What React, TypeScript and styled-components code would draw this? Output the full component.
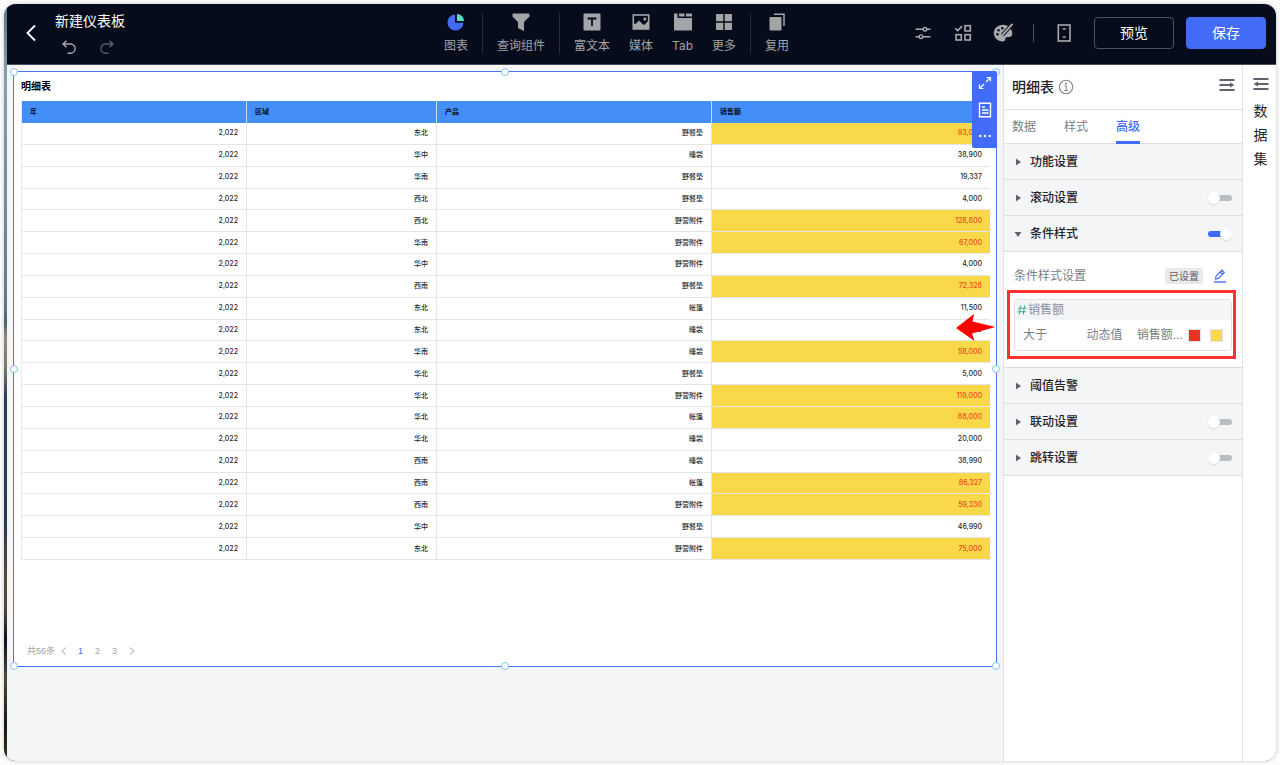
import React, { useState } from "react";
import styled, { createGlobalStyle } from "styled-components";

const GlobalStyle = createGlobalStyle`
  *, *::before, *::after { box-sizing: border-box; }
  body {
    margin: 0;
    background: #fdfdfd;
    color: #1f2329;
    font-family: Inter, "Noto Sans CJK SC", sans-serif;
    font-size: 12px;
    line-height: 18px;
  }
  button, input { font: inherit; color: inherit; }
  svg { display: block; flex: none; }
`;

/* ---------- shell ---------- */

const Page = styled.div`
  display: flex;
  min-height: 100vh;
  padding: 4px;
`;

const Window = styled.div`
  flex: 1;
  min-width: 0;
  display: flex;
  flex-direction: column;
  padding-left: 3px;
  overflow: hidden;
  border-radius: 12px;
  background: linear-gradient(
    #5b7480 0%,
    #87a2ad 10%,
    #5f7988 40%,
    #4f5f70 42%,
    #93897a 44%,
    #7d776d 48%,
    #2c3d59 52%,
    #2b3852 68%,
    #5a4a3c 76%,
    #57473a 80%,
    #0a1224 84%,
    #54493c 89%,
    #1d160d 95%,
    #3a2c1d 100%
  );
  box-shadow: 0 0 4px rgba(0, 0, 0, 0.22);
`;

const Header = styled.header`
  display: flex;
  align-items: stretch;
  height: 61px;
  padding-bottom: 2px;
  background: #060c1c;
  border-bottom: 1px solid #4a4e5a;
`;

const HeaderStart = styled.div`
  flex: 7;
  display: flex;
  align-items: center;
  gap: 18px;
  padding-left: 18px;
`;

const TitleBlock = styled.div`
  display: flex;
  flex-direction: column;
  gap: 8px;
`;

const DashboardTitle = styled.h1`
  margin: 0;
  color: #fff;
  font-size: 14px;
  font-weight: 400;
  line-height: 20px;
`;

const History = styled.div`
  display: flex;
  gap: 22px;
  padding-left: 6px;
`;

const IconButton = styled.button<{ $color?: string }>`
  display: flex;
  align-items: center;
  justify-content: center;
  padding: 0;
  border: 0;
  background: none;
  color: ${(p) => p.$color || "#a8a9ac"};
  cursor: pointer;
`;

const Toolbar = styled.nav`
  display: flex;
  align-items: center;
`;

const ToolGroup = styled.div`
  display: flex;
  gap: 19px;
  padding: 0 14px;
  height: 40px;
  & + & { border-left: 1px solid #2a2f3d; }
`;

const ToolButton = styled.button`
  display: flex;
  flex-direction: column;
  align-items: center;
  gap: 6px;
  padding: 0;
  border: 0;
  background: none;
  color: #a3a4a6;
  font-size: 12px;
  line-height: 18px;
  white-space: nowrap;
  cursor: pointer;
`;

const HeaderEnd = styled.div`
  flex: 8;
  display: flex;
  align-items: center;
  justify-content: flex-end;
  gap: 20px;
  padding-right: 10px;
`;

const Divider = styled.span`
  width: 1px;
  height: 18px;
  background: #4c505b;
`;

const Actions = styled.div`
  display: flex;
  gap: 12px;
`;

const ActionButton = styled.button<{ $primary?: boolean }>`
  width: 80px;
  height: 32px;
  padding: 0;
  border: 1px solid ${(p) => (p.$primary ? "#426cf8" : "#4d515d")};
  border-radius: 4px;
  background: ${(p) => (p.$primary ? "#426cf8" : "transparent")};
  color: #fff;
  font-size: 14px;
  line-height: 20px;
  cursor: pointer;
`;

const Body = styled.div`
  flex: 1;
  display: flex;
  background: #f4f5f7;
`;

/* ---------- canvas ---------- */

const Canvas = styled.main`
  flex: 1;
  min-width: 0;
  padding: 6px;
`;

const Widget = styled.section`
  position: relative;
  display: flex;
  flex-direction: column;
  min-height: 596px;
  padding: 6px 8px 6px 7px;
  border: 1px solid #4f74f7;
  background: #fff;
`;

const WidgetTitle = styled.h2`
  margin: 0;
  padding-bottom: 7px;
  color: #000;
  font-size: 10px;
  font-weight: 700;
  line-height: 16px;
`;

const Table = styled.table`
  width: 100%;
  height: 459px;
  table-layout: fixed;
  border-collapse: separate;
  border-spacing: 0;
  border-left: 1px solid #e9eaec;
  color: #2b2c2e;
  font-size: 7px;
  line-height: 10px;
`;

const HeadCell = styled.th`
  height: 22px;
  padding: 0 8px;
  border-right: 1px solid #c9dbf2;
  background: #448ef7;
  color: #06101f;
  font-weight: 700;
  text-align: left;
  &:last-child { border-right: 0; }
`;

const Cell = styled.td<{ $marked?: boolean }>`
  padding: 0 8px;
  border-right: 1px solid #e4e5e6;
  border-bottom: 1px solid #e4e5e6;
  background: ${(p) => (p.$marked ? "#f9d84a" : "#fff")};
  color: ${(p) => (p.$marked ? "#ee4a22" : "inherit")};
  font-weight: 500;
  text-align: right;
  &:last-child { border-right: 0; }
`;

const Pager = styled.div`
  display: flex;
  align-items: center;
  margin-top: auto;
  padding: 0 6px;
  color: #a4a6aa;
  font-family: "Liberation Sans", "Noto Sans CJK SC", sans-serif;
  font-size: 9px;
  line-height: 18px;
`;

const PageButton = styled.button<{ $current?: boolean }>`
  display: flex;
  align-items: center;
  justify-content: center;
  width: 17px;
  height: 18px;
  padding: 0;
  border: 0;
  background: none;
  color: ${(p) => (p.$current ? "#426cf8" : "#a4a6aa")};
  cursor: pointer;
`;

const Handle = styled.span<{ $x: number; $y: number }>`
  position: absolute;
  left: ${(p) => p.$x}%;
  top: ${(p) => p.$y}%;
  width: 8px;
  height: 8px;
  margin: -4px 0 0 -4px;
  border: 1px solid #7cc6f7;
  border-radius: 50%;
  background: #fff;
`;

const FloatingTools = styled.div`
  position: absolute;
  top: -1px;
  right: -1px;
  display: flex;
  flex-direction: column;
  justify-content: space-between;
  align-items: center;
  width: 25px;
  height: 77px;
  padding: 5px 0;
  border-radius: 2px;
  background: #426cf8;
`;

const ArrowMark = styled.svg`
  position: absolute;
  top: 242px;
  right: 0;
`;

/* ---------- settings panel ---------- */

const Panel = styled.aside`
  width: 240px;
  border-left: 1px solid #dfe1e4;
  border-right: 1px solid #dfe1e4;
  background: #fff;
`;

const PanelHeader = styled.div`
  display: flex;
  align-items: center;
  gap: 4px;
  height: 45px;
  padding: 0 7px 0 8px;
  border-bottom: 1px solid #dfe1e4;
`;

const PanelTitle = styled.h2`
  margin: 0;
  font-size: 14px;
  font-weight: 500;
  line-height: 20px;
`;

const PushEnd = styled.span`
  margin-left: auto;
  padding-bottom: 5px;
`;

const Tabs = styled.div`
  display: flex;
  gap: 28px;
  height: 34px;
  padding: 0 8px;
  border-bottom: 1px solid #dfe1e4;
`;

const Tab = styled.button<{ $active?: boolean }>`
  margin-bottom: -1px;
  padding: 0;
  border: 0;
  border-top: 3px solid transparent;
  border-bottom: 3px solid ${(p) => (p.$active ? "#426cf8" : "transparent")};
  background: none;
  color: ${(p) => (p.$active ? "#426cf8" : "#7b7f88")};
  font-weight: ${(p) => (p.$active ? 500 : 400)};
  cursor: pointer;
`;

const SectionRow = styled.div`
  display: flex;
  align-items: center;
  height: 36px;
  padding: 0 10px 0 8px;
  border-bottom: 1px solid #dcdee1;
  background: #f4f5f7;
`;

const SectionToggle = styled.button`
  display: flex;
  align-items: center;
  gap: 6px;
  padding: 0;
  border: 0;
  background: none;
  font-size: 12px;
  font-weight: 500;
  cursor: pointer;
`;

const Caret = styled.svg<{ $open?: boolean }>`
  width: 12px;
  height: 12px;
  fill: #5f636b;
  transform: rotate(${(p) => (p.$open ? 90 : 0)}deg);
`;

const Switch = styled.input`
  appearance: none;
  display: flex;
  align-items: center;
  width: 24px;
  height: 12px;
  margin: 0 0 0 auto;
  background: linear-gradient(#b9bcc3, #b9bcc3) center / 20px 6px no-repeat;
  border-radius: 6px;
  cursor: pointer;
  &::before {
    content: "";
    width: 12px;
    height: 12px;
    border-radius: 50%;
    background: #fff;
    box-shadow: 0 1px 2px rgba(0, 0, 0, 0.12);
  }
  &::after {
    content: "";
    width: 12px;
    height: 6px;
    border-radius: 0 3px 3px 0;
    background: #b9bcc3;
  }
  &:checked {
    flex-direction: row-reverse;
    background-image: linear-gradient(#426cf8, #426cf8);
  }
  &:checked::after {
    border-radius: 3px 0 0 3px;
    background: #426cf8;
  }
`;

const SectionBody = styled.div`
  padding: 15px 10px 16px;
  border-bottom: 1px solid #dcdee1;
`;

const SettingLine = styled.div`
  display: flex;
  align-items: center;
  padding-right: 5px;
  color: #7b7f88;
`;

const StatusTag = styled.span`
  margin: 0 10px 0 auto;
  padding: 0 4px;
  border-radius: 2px;
  background: #e7e9ea;
  color: #5a5e66;
  font-size: 10px;
  line-height: 16px;
`;

const RuleCard = styled.div`
  position: relative;
  margin-top: 14px;
  border: 1px solid #dfe1e6;
  border-radius: 4px;
`;

const RuleField = styled.div`
  display: flex;
  gap: 1px;
  align-items: center;
  height: 20px;
  padding: 0 2px;
  background: #f3f5f7;
  color: #8790a3;
`;

const RuleRow = styled.div`
  display: flex;
  align-items: center;
  height: 30px;
  padding: 0 8px;
  color: #7b7f88;
`;

const Operator = styled.span`
  flex: 1;
`;

const Operand = styled.span`
  margin-right: 14px;
`;

const Target = styled.span`
  margin-right: 5px;
`;

const Swatch = styled.button<{ $color: string }>`
  width: 13px;
  height: 13px;
  padding: 0;
  border: 1px solid #e1e3e8;
  background: ${(p) => p.$color};
  cursor: pointer;
  & + & { margin-left: 9px; }
`;

const RedFrame = styled.div`
  position: absolute;
  inset: -10px -5px -9px -8px;
  border: 3px solid #fb3330;
  pointer-events: none;
`;

const DatasetRail = styled.aside`
  display: flex;
  flex-direction: column;
  align-items: center;
  gap: 8px;
  width: 33px;
  padding: 12px 0 0 2px;
  background: #fff;
`;

const RailLabel = styled.span`
  width: 14px;
  font-size: 14px;
  line-height: 24px;
`;

/* ---------- icons ---------- */

const ChartIcon = () => (
  <svg width="18" height="18" viewBox="0 0 18 18">
    <path d="M8 1.5a8 8 0 1 0 8.5 8.2H8z" fill="#426cf8" />
    <path d="M10 1a7 7 0 0 1 7 7h-7z" fill="#5fdcc0" />
  </svg>
);
const FunnelIcon = () => (
  <svg width="18" height="18" viewBox="0 0 18 18" fill="currentColor">
    <path d="M1.500 .5h15q1 0 1 1V3.500l-5.500 5.500v9l-6-3V9L.5 3.500v-2q0-1 1-1z" />
  </svg>
);
const RichTextIcon = () => (
  <svg width="18" height="18" viewBox="0 0 18 18">
    <rect x=".5" y=".5" width="17" height="17" rx="1" fill="currentColor" />
    <path d="M4.500 5.500h9M9 5.500V13" stroke="#060c1c" strokeWidth="1.800" />
  </svg>
);
const MediaIcon = () => (
  <svg width="18" height="18" viewBox="0 0 18 18">
    <rect x="1.300" y="2" width="15.400" height="14" fill="none" stroke="currentColor" strokeWidth="1.600" />
    <path d="M2 10.500l1.500.5L7 7.500l4 4 1.500.3 3.500-3.800V16H2z" fill="currentColor" />
    <circle cx="12.800" cy="6" r="1.500" fill="currentColor" />
  </svg>
);
const TabIcon = () => (
  <svg width="20" height="18" viewBox="0 0 20 18" fill="currentColor">
    <path d="M1 .5h3.500V5H19v11.500q0 1-1 1H2q-1 0-1-1z" />
    <path d="M6 .5h5.500v3H6zM13 .5h5q1 0 1 1v2h-6z" />
  </svg>
);
const MoreIcon = () => (
  <svg width="18" height="18" viewBox="0 0 18 18" fill="currentColor">
    <rect x="1" y="1" width="7.300" height="7.300" rx=".8" />
    <rect x="9.700" y="1" width="7.300" height="7.300" rx=".8" />
    <rect x="1" y="9.700" width="7.300" height="7.300" rx=".8" />
    <rect x="9.700" y="9.700" width="7.300" height="7.300" rx=".8" />
  </svg>
);
const ReuseIcon = () => (
  <svg width="18" height="18" viewBox="0 0 18 18">
    <rect x="1.500" y="4" width="12" height="13.500" rx="1" fill="currentColor" />
    <path d="M6 1.300h10V13" fill="none" stroke="currentColor" strokeWidth="1.500" />
  </svg>
);
const BackIcon = () => (
  <svg width="12" height="18" viewBox="0 0 12 18" fill="none" stroke="#fff" strokeWidth="1.800">
    <path d="M10 1.500L2.500 9l7.500 7.500" />
  </svg>
);
const UndoIcon = ({ flip }: { flip?: boolean }) => (
  <svg width="16" height="16" viewBox="0 0 16 16" fill="none" stroke="currentColor" strokeWidth="1.400">
    <g transform={flip ? "translate(16 0) scale(-1 1)" : undefined}>
      <path d="M5.500 1.800L2 5l3.500 3.300M2 5h7.500a4.600 4.600 0 0 1 0 9.200H6.500" />
    </g>
  </svg>
);
const SlidersIcon = () => (
  <svg width="20" height="20" viewBox="0 0 20 20" fill="none" stroke="currentColor" strokeWidth="1.400">
    <path d="M2.500 6.300h7.500M14 6.300h3.500M2.500 13.700H6M10 13.700h7.500" />
    <circle cx="12" cy="6.300" r="1.800" />
    <circle cx="8" cy="13.700" r="1.800" />
  </svg>
);
const CheckGridIcon = () => (
  <svg width="20" height="20" viewBox="0 0 20 20" fill="none" stroke="currentColor" strokeWidth="1.600">
    <path d="M2.300 5.200l2.400 2.400 4.300-4.500" />
    <rect x="12" y="2.700" width="5.300" height="5.300" />
    <rect x="3" y="11.700" width="5.300" height="5.300" />
    <rect x="12" y="11.700" width="5.300" height="5.300" />
  </svg>
);
const PaletteIcon = () => (
  <svg width="20" height="20" viewBox="0 0 20 20">
    <path
      d="M10 1.700C5 1.700.8 5.300.8 10s4 8.400 8.700 8.400c1.700 0 2.800-.6 2.800-1.900 0-1.700.7-2.400 2.200-2.400h1.800c2 0 3-1.700 3-3.600 0-4.700-4.300-8.800-9.300-8.800z"
      fill="currentColor"
    />
    <g fill="#060c1c">
      <circle cx="4.500" cy="11.300" r="1.200" />
      <circle cx="5.600" cy="7.300" r="1.200" />
      <circle cx="9.300" cy="5.300" r="1.200" />
    </g>
    <path d="M20 .5L9.500 12" stroke="#060c1c" strokeWidth="3.800" />
    <path d="M19.500 1L9.500 12" stroke="currentColor" strokeWidth="1.900" />
  </svg>
);
const DeviceIcon = () => (
  <svg width="20" height="20" viewBox="0 0 20 20" fill="none" stroke="currentColor" strokeWidth="1.600">
    <rect x="4.300" y="2" width="11.700" height="16" />
    <path d="M8.700 6h3M8.700 14h3" />
  </svg>
);
const ExpandIcon = () => (
  <svg width="14" height="14" viewBox="0 0 14 14" fill="none" stroke="#fff" strokeWidth="1.200">
    <path d="M8.500 1.500h4v4M12.500 1.500L8 6M5.500 12.500h-4v-4M1.500 12.500L6 8" />
  </svg>
);
const DocIcon = () => (
  <svg width="14" height="16" viewBox="0 0 14 16" fill="none" stroke="#fff" strokeWidth="1.400">
    <path d="M1.500 1.200h11v13.600h-11zM4 5h3M4 8h6.500M4 11h6.500" />
  </svg>
);
const DotsIcon = () => (
  <svg width="14" height="14" viewBox="0 0 14 14" fill="#fff">
    <circle cx="2.300" cy="7" r="1.200" />
    <circle cx="7" cy="7" r="1.200" />
    <circle cx="11.700" cy="7" r="1.200" />
  </svg>
);
const InfoIcon = () => (
  <svg width="16" height="16" viewBox="0 0 16 16" fill="none" stroke="#858991" strokeWidth="1.100">
    <circle cx="8" cy="8" r="6.700" />
    <path d="M6.500 7h1.700v4.500M6.200 11.500h4" />
    <circle cx="8" cy="4.700" r=".5" fill="#858991" />
  </svg>
);
const CollapseIcon = ({ flip }: { flip?: boolean }) => (
  <svg width="16" height="14" viewBox="0 0 16 14" fill="#5f636c">
    <g transform={flip ? "translate(16 0) scale(-1 1)" : undefined}>
      <path d="M.5 1h15v2H.5zM.5 11h15v2H.5zM.5 6h10.500v2H.5zM11 4.500l4.500 2.500L11 9.500z" />
    </g>
  </svg>
);
const PencilIcon = () => (
  <svg width="14" height="14" viewBox="0 0 14 14" fill="none" stroke="#426cf8" strokeWidth="1.200">
    <path d="M2.500 10l.6-3L9 1.200l2.300 2.300-5.900 5.900zM7.300 3l2.200 2.200" />
    <path d="M1 13h12" strokeWidth="1.400" />
  </svg>
);
const HashIcon = () => (
  <svg width="10" height="10" viewBox="0 0 10 10" fill="none" stroke="#3fae92" strokeWidth="1.100">
    <path d="M3.700.5L2.200 9.500M7.700.5L6.200 9.500M1 3.200h8.500M.5 6.800H9" />
  </svg>
);
const Chevron = ({ right }: { right?: boolean }) => (
  <svg width="6" height="8" viewBox="0 0 6 8" fill="none" stroke="currentColor" strokeWidth="1">
    <path d={right ? "M1 .5L5 4 1 7.500" : "M5 .5L1 4l4 3.500"} />
  </svg>
);

/* ---------- data ---------- */

const rows: [string, string, string, string, boolean][] = [
  ["2,022", "东北", "野餐垫", "93,000", true],
  ["2,022", "华中", "睡袋", "38,900", false],
  ["2,022", "华南", "野餐垫", "19,337", false],
  ["2,022", "西北", "野餐垫", "4,000", false],
  ["2,022", "西北", "野营附件", "128,800", true],
  ["2,022", "华南", "野营附件", "67,000", true],
  ["2,022", "华中", "野营附件", "4,000", false],
  ["2,022", "西南", "野餐垫", "72,328", true],
  ["2,022", "东北", "帐篷", "11,500", false],
  ["2,022", "东北", "睡袋", "12,000", false],
  ["2,022", "华南", "睡袋", "58,000", true],
  ["2,022", "华北", "野餐垫", "5,000", false],
  ["2,022", "华北", "野营附件", "119,000", true],
  ["2,022", "华北", "帐篷", "88,000", true],
  ["2,022", "华北", "睡袋", "20,000", false],
  ["2,022", "西南", "睡袋", "38,990", false],
  ["2,022", "西南", "帐篷", "86,327", true],
  ["2,022", "西南", "野营附件", "59,330", true],
  ["2,022", "华中", "野餐垫", "46,990", false],
  ["2,022", "东北", "野营附件", "75,000", true],
];

const toolGroups = [
  [{ label: "图表", icon: <ChartIcon /> }],
  [{ label: "查询组件", icon: <FunnelIcon /> }],
  [
    { label: "富文本", icon: <RichTextIcon /> },
    { label: "媒体", icon: <MediaIcon /> },
    { label: "Tab", icon: <TabIcon /> },
    { label: "更多", icon: <MoreIcon /> },
  ],
  [{ label: "复用", icon: <ReuseIcon /> }],
];

const handles = [
  [0, 0], [50, 0], [100, 0], [0, 50], [100, 50], [0, 100], [50, 100], [100, 100],
];

function Section({ label, open, toggle }: { label: string; open?: boolean; toggle?: boolean }) {
  const [on, setOn] = useState(!!open);
  return (
    <SectionRow>
      <SectionToggle aria-expanded={!!open}>
        <Caret viewBox="0 0 12 12" $open={open}>
          <path d="M4 2.500L9 6 4 9.500z" />
        </Caret>
        {label}
      </SectionToggle>
      {toggle && (
        <Switch
          type="checkbox"
          role="switch"
          aria-label={label}
          checked={on}
          onChange={(e) => setOn(e.target.checked)}
        />
      )}
    </SectionRow>
  );
}

export default function App() {
  return (
    <Page>
      <GlobalStyle />
      <Window>
        <Header>
          <HeaderStart>
            <IconButton aria-label="返回"><BackIcon /></IconButton>
            <TitleBlock>
              <DashboardTitle>新建仪表板</DashboardTitle>
              <History>
                <IconButton aria-label="撤销"><UndoIcon /></IconButton>
                <IconButton aria-label="重做" $color="#5b5e66"><UndoIcon flip /></IconButton>
              </History>
            </TitleBlock>
          </HeaderStart>
          <Toolbar>
            {toolGroups.map((group) => (
              <ToolGroup key={group[0].label}>
                {group.map((tool) => (
                  <ToolButton key={tool.label}>
                    {tool.icon}
                    {tool.label}
                  </ToolButton>
                ))}
              </ToolGroup>
            ))}
          </Toolbar>
          <HeaderEnd>
            <IconButton aria-label="筛选"><SlidersIcon /></IconButton>
            <IconButton aria-label="批量"><CheckGridIcon /></IconButton>
            <IconButton aria-label="主题"><PaletteIcon /></IconButton>
            <Divider />
            <IconButton aria-label="移动端"><DeviceIcon /></IconButton>
            <Actions>
              <ActionButton>预览</ActionButton>
              <ActionButton $primary>保存</ActionButton>
            </Actions>
          </HeaderEnd>
        </Header>
        <Body>
          <Canvas>
            <Widget>
              <WidgetTitle>明细表</WidgetTitle>
              <Table>
                <colgroup>
                  <col width="225" />
                  <col width="190" />
                  <col width="275" />
                  <col width="278" />
                </colgroup>
                <thead>
                  <tr>
                    <HeadCell>年</HeadCell>
                    <HeadCell>区域</HeadCell>
                    <HeadCell>产品</HeadCell>
                    <HeadCell>销售额</HeadCell>
                  </tr>
                </thead>
                <tbody>
                  {rows.map(([year, area, product, sales, marked], i) => (
                    <tr key={i}>
                      <Cell>{year}</Cell>
                      <Cell>{area}</Cell>
                      <Cell>{product}</Cell>
                      <Cell $marked={marked}>{sales}</Cell>
                    </tr>
                  ))}
                </tbody>
              </Table>
              <Pager>
                共56条
                <PageButton aria-label="上一页"><Chevron /></PageButton>
                <PageButton $current>1</PageButton>
                <PageButton>2</PageButton>
                <PageButton>3</PageButton>
                <PageButton aria-label="下一页"><Chevron right /></PageButton>
              </Pager>
              {handles.map(([x, y]) => (
                <Handle key={`${x}-${y}`} $x={x} $y={y} />
              ))}
              <FloatingTools>
                <IconButton aria-label="放大"><ExpandIcon /></IconButton>
                <IconButton aria-label="明细"><DocIcon /></IconButton>
                <IconButton aria-label="更多操作"><DotsIcon /></IconButton>
              </FloatingTools>
              <ArrowMark width="40" height="28" viewBox="0 0 40 28" fill="#fe0000">
                <path d="M0 14L18 0l-1.500 7.500L39.500 13 16 19.500 18.500 27z" />
              </ArrowMark>
            </Widget>
          </Canvas>
          <Panel>
            <PanelHeader>
              <PanelTitle>明细表</PanelTitle>
              <InfoIcon />
              <PushEnd>
                <IconButton aria-label="收起面板"><CollapseIcon /></IconButton>
              </PushEnd>
            </PanelHeader>
            <Tabs role="tablist">
              <Tab role="tab">数据</Tab>
              <Tab role="tab">样式</Tab>
              <Tab role="tab" aria-selected $active>高级</Tab>
            </Tabs>
            <Section label="功能设置" />
            <Section label="滚动设置" toggle />
            <Section label="条件样式" open toggle />
            <SectionBody>
              <SettingLine>
                条件样式设置
                <StatusTag>已设置</StatusTag>
                <IconButton aria-label="编辑条件样式"><PencilIcon /></IconButton>
              </SettingLine>
              <RuleCard>
                <RuleField>
                  <HashIcon />
                  销售额
                </RuleField>
                <RuleRow>
                  <Operator>大于</Operator>
                  <Operand>动态值</Operand>
                  <Target>销售额...</Target>
                  <Swatch $color="#ea3323" aria-label="文字颜色" />
                  <Swatch $color="#f9d84a" aria-label="背景颜色" />
                </RuleRow>
                <RedFrame />
              </RuleCard>
            </SectionBody>
            <Section label="阈值告警" />
            <Section label="联动设置" toggle />
            <Section label="跳转设置" toggle />
          </Panel>
          <DatasetRail>
            <IconButton aria-label="展开数据集"><CollapseIcon flip /></IconButton>
            <RailLabel>数据集</RailLabel>
          </DatasetRail>
        </Body>
      </Window>
    </Page>
  );
}
